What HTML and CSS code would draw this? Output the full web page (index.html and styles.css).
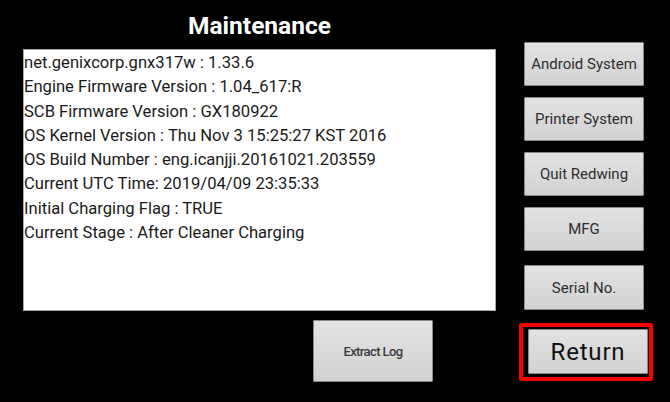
FILE: index.html
```html
<!DOCTYPE html>
<html>
<head>
<meta charset="utf-8">
<title>Maintenance</title>
<link rel="stylesheet" href="styles.css">
</head>
<body>
<div class="screen">
  <div class="left">
    <h1 class="title">Maintenance</h1>
    <div class="info">
      <div class="line">net.genixcorp.gnx317w : 1.33.6</div>
      <div class="line">Engine Firmware Version : 1.04_617:R</div>
      <div class="line">SCB Firmware Version : GX180922</div>
      <div class="line">OS Kernel Version : Thu Nov 3 15:25:27 KST 2016</div>
      <div class="line">OS Build Number : eng.icanjji.20161021.203559</div>
      <div class="line">Current UTC Time: 2019/04/09 23:35:33</div>
      <div class="line">Initial Charging Flag : TRUE</div>
      <div class="line">Current Stage : After Cleaner Charging</div>
    </div>
    <button class="btn extract">Extract Log</button>
  </div>
  <div class="right">
    <button class="btn side">Android System</button>
    <button class="btn side">Printer System</button>
    <button class="btn side">Quit Redwing</button>
    <button class="btn side">MFG</button>
    <button class="btn side serial">Serial No.</button>
    <div class="highlight">
      <button class="btn ret">Return</button>
    </div>
  </div>
</div>
</body>
</html>
```

FILE: styles.css
```css
html, body {
  margin: 0;
  padding: 0;
  background: #000;
}
body {
  width: 670px;
  height: 402px;
  overflow: hidden;
  font-family: Roboto, "Noto Sans", sans-serif;
}
.screen {
  display: flex;
  padding-left: 23px;
}
.left {
  width: 473px;
  display: flex;
  flex-direction: column;
}
.title {
  margin: 0;
  height: 49px;
  box-sizing: border-box;
  padding-top: 2px;
  line-height: 47px;
  font-size: 24.5px;
  font-weight: 700;
  color: #fff;
  text-align: center;
}
.info {
  height: 262px;
  box-sizing: border-box;
  background: #fff;
  border: 1px solid #a8a8a8;
  padding-top: 1px;
  color: #1a1a1a;
  font-size: 16.6px;
  line-height: 24.3px;
  white-space: nowrap;
}
.btn {
  display: flex;
  align-items: center;
  justify-content: center;
  box-sizing: border-box;
  margin: 0;
  padding: 0;
  border: 1px solid #8a8a8a;
  border-radius: 1px;
  background: linear-gradient(#e2e2e2, #d2d2d2);
  font-family: Roboto, "Noto Sans", sans-serif;
  color: #2e2e2e;
}
.extract {
  margin-top: 9px;
  margin-left: 290px;
  width: 120px;
  height: 62px;
  font-size: 13px;
  font-weight: 500;
  letter-spacing: -0.6px;
  color: #3a3a3a;
}
.right {
  margin-left: 28px;
  width: 120px;
  padding-top: 42px;
  display: flex;
  flex-direction: column;
}
.side {
  width: 120px;
  height: 44px;
  margin-bottom: 11px;
  font-size: 15px;
}
.serial {
  margin-top: 3px;
  height: 45px;
  margin-bottom: 0;
}
.highlight {
  margin-top: 13px;
  margin-left: -5px;
  width: 134px;
  height: 58px;
  box-sizing: border-box;
  border: 4px solid #ff0000;
  border-radius: 2px;
  padding: 1px 5px 4px 1px;
}
.ret {
  margin-left: 4px;
  margin-top: 1px;
  width: 120px;
  height: 45px;
  font-size: 24px;
  letter-spacing: 0.8px;
  color: #111;
}
```
